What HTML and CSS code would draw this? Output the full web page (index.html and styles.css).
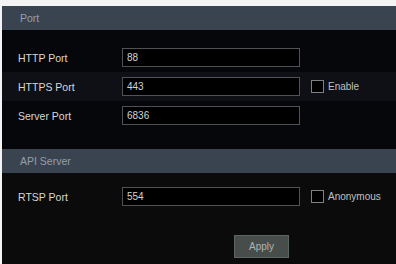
FILE: index.html
```html
<!DOCTYPE html>
<html>
<head>
<meta charset="utf-8">
<link rel="stylesheet" href="styles.css">
</head>
<body>
<div class="panel">
  <section class="sec sec-port">
    <div class="sec-head">Port</div>
    <div class="rows">
      <div class="row">
        <div class="label">HTTP Port</div>
        <div class="input">88</div>
      </div>
      <div class="row row-hl">
        <div class="label">HTTPS Port</div>
        <div class="input">443</div>
        <label class="check"><span class="box"></span><span class="check-text">Enable</span></label>
      </div>
      <div class="row">
        <div class="label">Server Port</div>
        <div class="input">6836</div>
      </div>
    </div>
  </section>
  <section class="sec sec-api">
    <div class="sec-head">API Server</div>
    <div class="rows rows-api">
      <div class="row">
        <div class="label">RTSP Port</div>
        <div class="input">554</div>
        <label class="check"><span class="box"></span><span class="check-text">Anonymous</span></label>
      </div>
    </div>
    <div class="actions">
      <button class="btn">Apply</button>
    </div>
  </section>
</div>
</body>
</html>
```
FILE: styles.css
```css
html, body {
  margin: 0;
  padding: 0;
  background: #f4f4f4;
  width: 396px;
  height: 264px;
  overflow: hidden;
  font-family: "Liberation Sans", Arial, sans-serif;
}
.panel {
  margin: 6px 0 0 2px;
  height: 258px;
  display: flex;
  flex-direction: column;
  background: #0b0b0c;
}
.sec-port {
  background: #06070b;
  height: 143px;
}
.sec-api {
  flex: 1;
  background: #0b0b0b;
}
.sec-head {
  height: 24px;
  background: #3a4450;
  color: #939fab;
  font-size: 10.5px;
  line-height: 24px;
  padding-left: 18px;
}
.rows {
  padding-top: 13px;
  display: flex;
  flex-direction: column;
}
.rows-api {
  padding-top: 9px;
}
.row {
  height: 29px;
  display: flex;
  align-items: center;
}
.row-hl {
  background: #0e1015;
}
.label {
  width: 104px;
  padding-left: 16px;
  color: #d8d8d8;
  font-size: 10.5px;
}
.input {
  width: 172px;
  height: 17px;
  border: 1px solid #505258;
  background: #000;
  color: #d4d4d4;
  font-size: 10px;
  line-height: 17px;
  padding-left: 4px;
}
.check {
  display: flex;
  align-items: center;
  margin-left: 11px;
  gap: 4px;
}
.box {
  width: 11px;
  height: 11px;
  border: 1px solid #7e8084;
  background: #000;
}
.check-text {
  color: #c0c0c0;
  font-size: 10px;
}
.actions {
  padding: 24px 0 0 232px;
  display: flex;
}
.btn {
  width: 55px;
  height: 23px;
  border: 1px solid #5c6462;
  background: #464d4b;
  color: #aeb4b3;
  font-family: "Liberation Sans", Arial, sans-serif;
  font-size: 10px;
  padding: 0;
}
```
